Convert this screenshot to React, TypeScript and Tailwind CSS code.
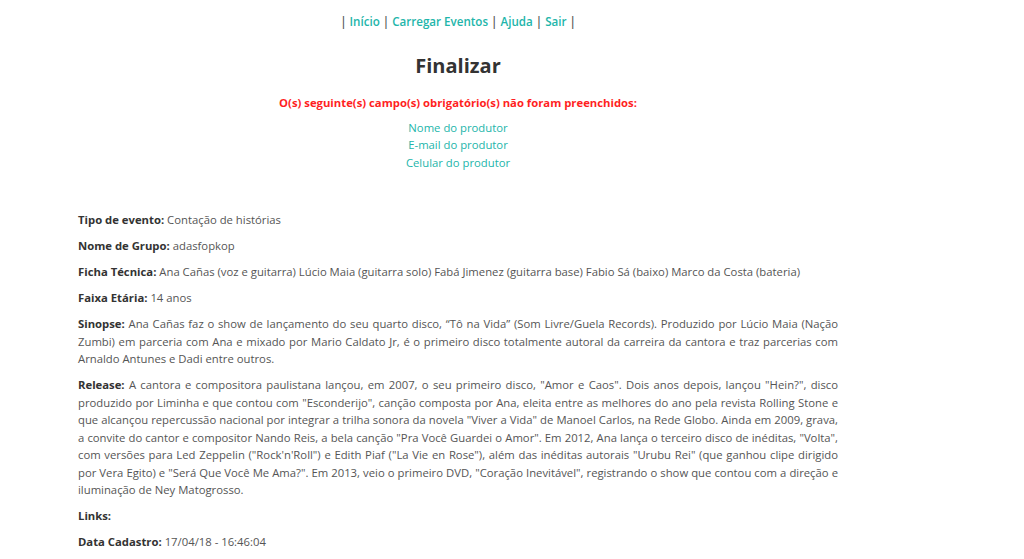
import React from "react";

const teal = "text-[#22b5aa]";

const Row = ({ label, children }: { label: string; children?: React.ReactNode }) => (
  <p className="mb-[8.5px] text-justify">
    <span className="font-bold text-[#333]">{label}</span> {children}
  </p>
);

const App = () => {
  return (
    <div className="min-h-[559px] bg-white font-['Open_Sans',sans-serif] text-[11.3px] leading-[17.5px] text-[#555]">
      <div className="ml-[78px] w-[760px]">
        <nav className="pt-[13px] text-center text-[11.6px] font-semibold leading-[17px]">
          <span className="text-[#555]">| </span>
          <a className={teal}>Início</a>
          <span className="text-[#555]"> | </span>
          <a className={teal}>Carregar Eventos</a>
          <span className="text-[#555]"> | </span>
          <a className={teal}>Ajuda</a>
          <span className="text-[#555]"> | </span>
          <a className={teal}>Sair</a>
          <span className="text-[#555]"> |</span>
        </nav>

        <h1 className="mt-[22px] text-center text-[20px] font-bold leading-[28px] text-[#333]">Finalizar</h1>

        <p className="mt-[14px] text-center font-bold text-[#ff1f1f]">
          O(s) seguinte(s) campo(s) obrigatório(s) não foram preenchidos:
        </p>

        <ul className={`mt-[7px] text-center ${teal}`}>
          <li>Nome do produtor</li>
          <li>E-mail do produtor</li>
          <li>Celular do produtor</li>
        </ul>

        <div className="mt-[40px]">
          <Row label="Tipo de evento:">Contação de histórias</Row>
          <Row label="Nome de Grupo:">adasfopkop</Row>
          <Row label="Ficha Técnica:">
            Ana Cañas (voz e guitarra) Lúcio Maia (guitarra solo) Fabá Jimenez (guitarra base) Fabio Sá (baixo) Marco da Costa (bateria)
          </Row>
          <Row label="Faixa Etária:">14 anos</Row>
          <Row label="Sinopse:">
            Ana Cañas faz o show de lançamento do seu quarto disco, “Tô na Vida” (Som Livre/Guela Records). Produzido por Lúcio Maia (Nação
            Zumbi) em parceria com Ana e mixado por Mario Caldato Jr, é o primeiro disco totalmente autoral da carreira da cantora e traz parcerias com
            Arnaldo Antunes e Dadi entre outros.
          </Row>
          <Row label="Release:">
            A cantora e compositora paulistana lançou, em 2007, o seu primeiro disco, "Amor e Caos". Dois anos depois, lançou "Hein?", disco
            produzido por Liminha e que contou com "Esconderijo", canção composta por Ana, eleita entre as melhores do ano pela revista Rolling Stone e
            que alcançou repercussão nacional por integrar a trilha sonora da novela "Viver a Vida" de Manoel Carlos, na Rede Globo. Ainda em 2009, grava,
            a convite do cantor e compositor Nando Reis, a bela canção "Pra Você Guardei o Amor". Em 2012, Ana lança o terceiro disco de inéditas, "Volta",
            com versões para Led Zeppelin ("Rock'n'Roll") e Edith Piaf ("La Vie en Rose"), além das inéditas autorais "Urubu Rei" (que ganhou clipe dirigido
            por Vera Egito) e "Será Que Você Me Ama?". Em 2013, veio o primeiro DVD, "Coração Inevitável", registrando o show que contou com a direção e
            iluminação de Ney Matogrosso.
          </Row>
          <Row label="Links:" />
          <Row label="Data Cadastro:">17/04/18 - 16:46:04</Row>
        </div>
      </div>
    </div>
  );
};

export default App;
